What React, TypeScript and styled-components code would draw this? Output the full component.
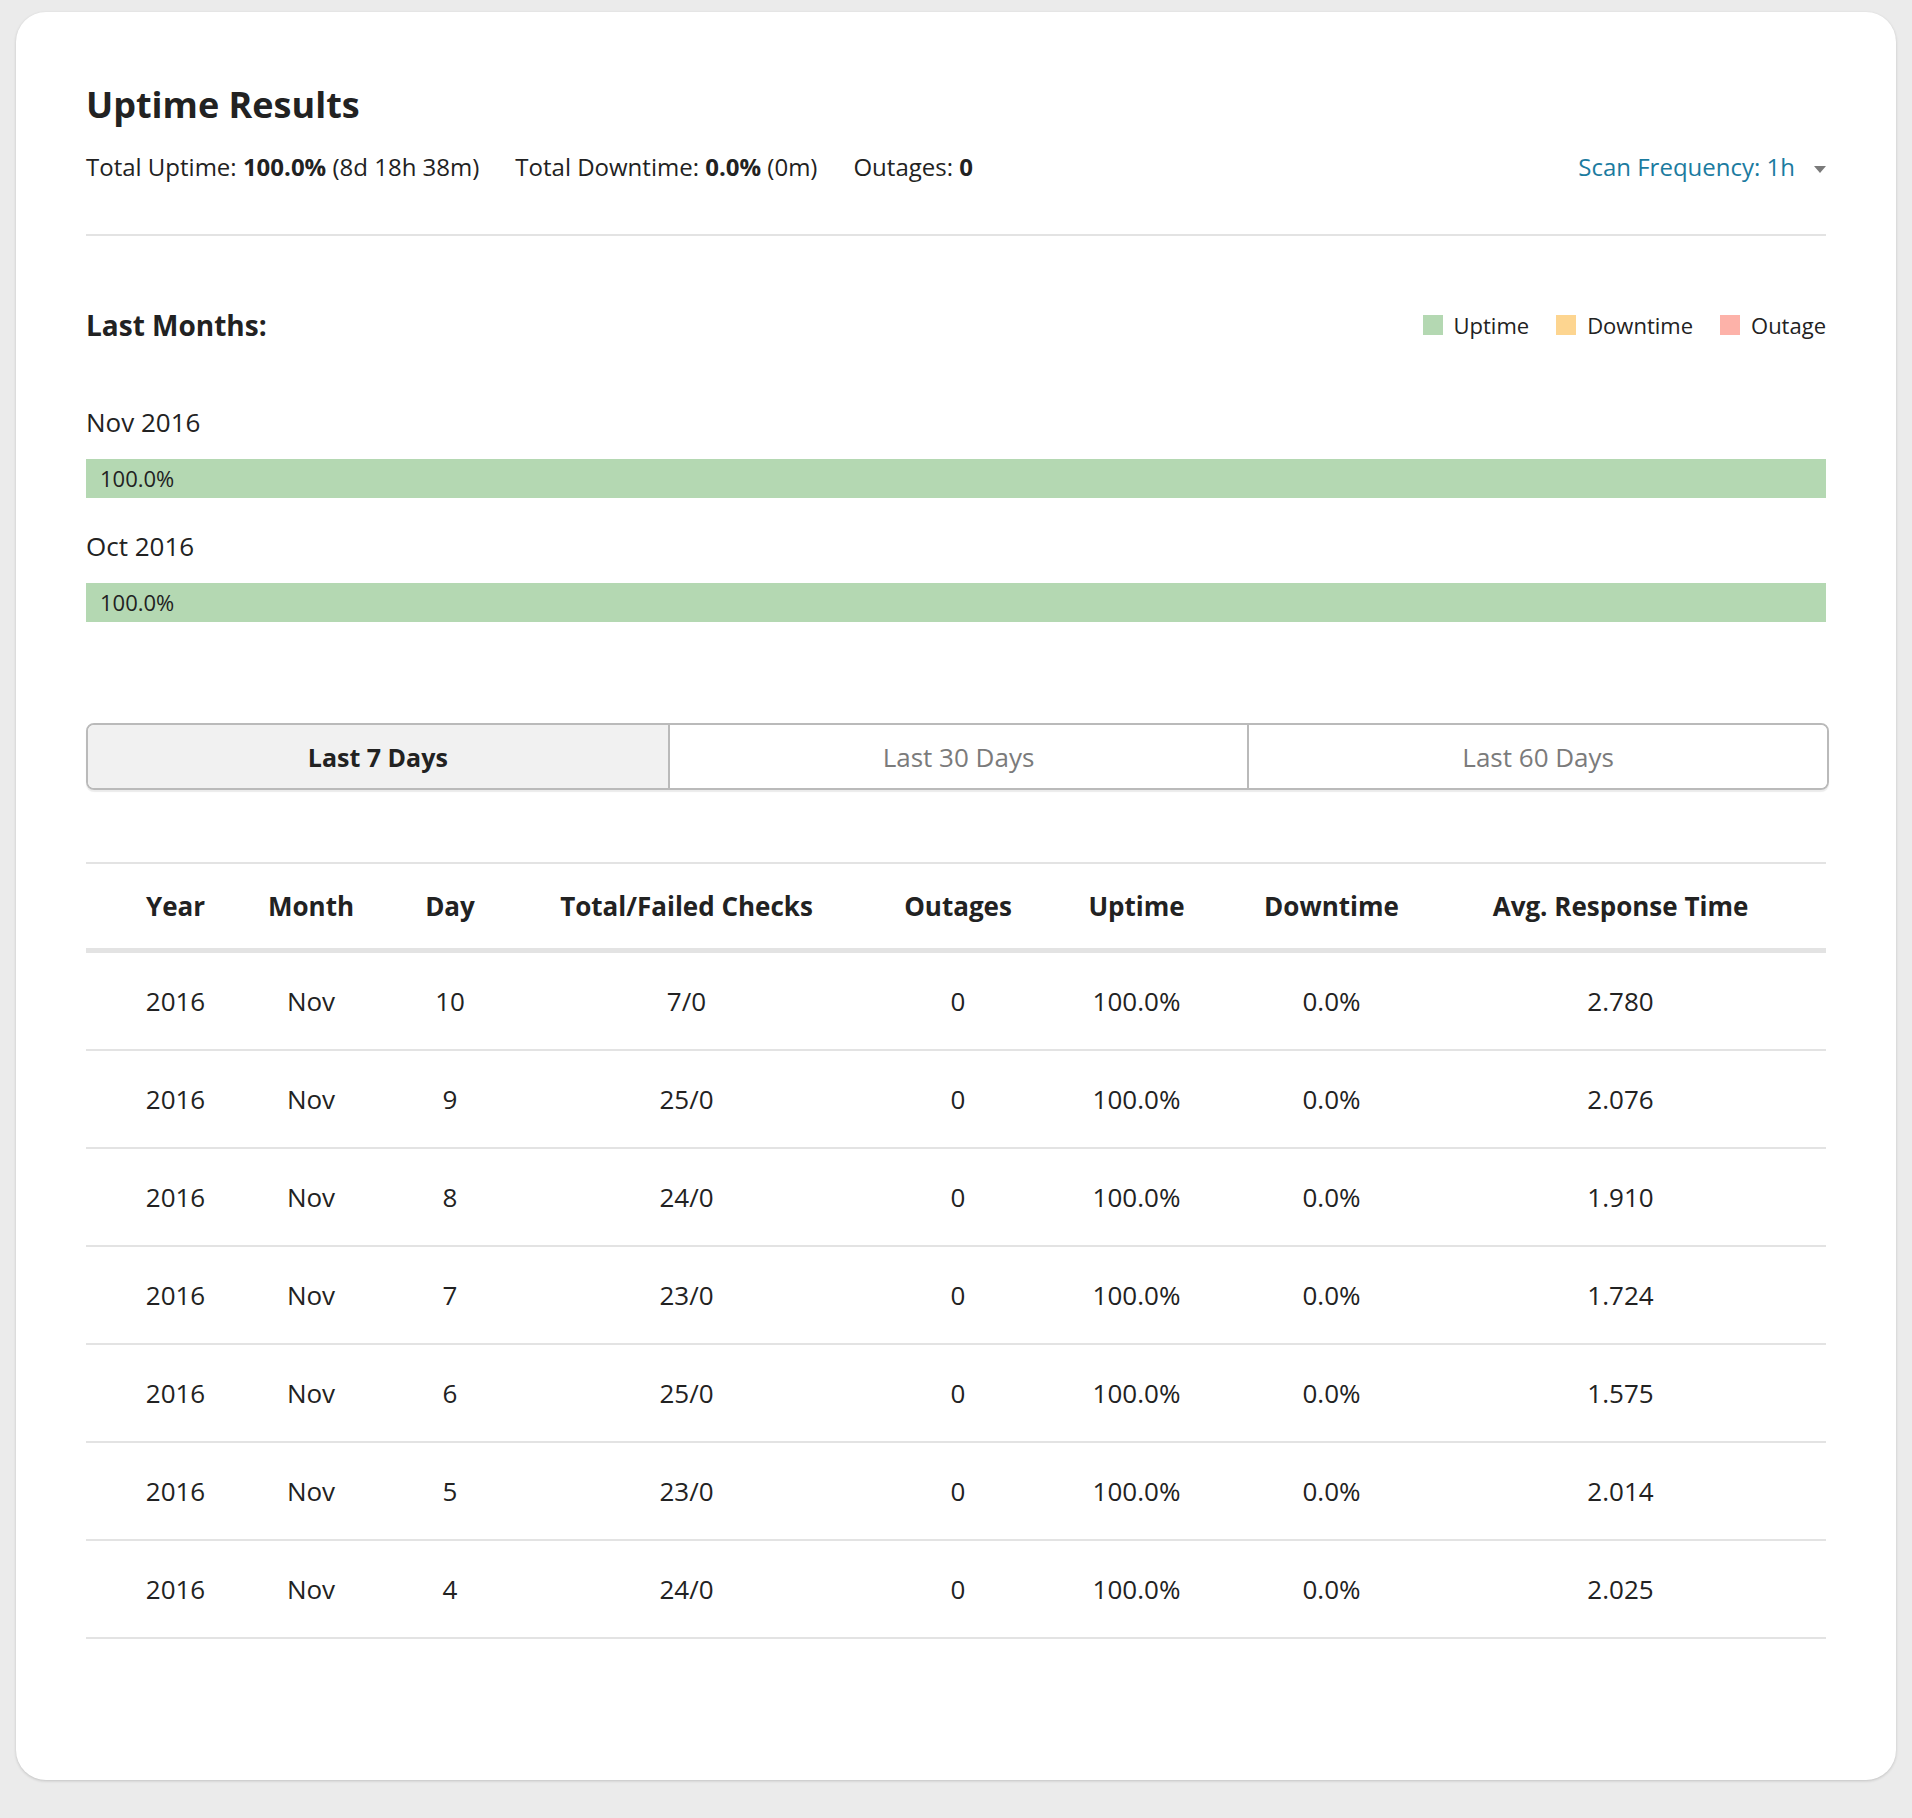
import React from "react";
import styled, { createGlobalStyle } from "styled-components";

const GlobalStyle = createGlobalStyle`
  html, body {
    margin: 0;
    padding: 0;
    background: #ebebeb;
  }
  body {
    font-family: "Open Sans", "Liberation Sans", Arial, sans-serif;
    color: #222;
  }
`;

const Page = styled.div`
  padding: 12px 16px 39px;
`;

const Card = styled.div`
  background: #fff;
  border-radius: 30px;
  box-shadow: 0 1px 3px rgba(0, 0, 0, 0.18);
  padding: 71px 70px 141px;
`;

const Title = styled.h1`
  margin: 0;
  font-size: 36px;
  line-height: 44px;
  font-weight: 700;
  color: #222;
`;

const StatsRow = styled.div`
  margin-top: 22px;
  display: flex;
  align-items: center;
  font-size: 24px;
  line-height: 36px;
`;

const Stat = styled.span`
  margin-right: 36px;
  white-space: nowrap;

  b {
    font-weight: 700;
  }
`;

const ScanFrequency = styled.div`
  margin-left: auto;
  display: flex;
  align-items: center;
  gap: 19px;
  color: #1b7b9f;
  cursor: pointer;
`;

const Caret = styled.span`
  width: 0;
  height: 0;
  border-left: 6px solid transparent;
  border-right: 6px solid transparent;
  border-top: 7px solid #7a7a7a;
  margin-top: 4px;
`;

const Divider = styled.hr`
  margin: 49px 0 0;
  border: 0;
  height: 2px;
  background: #e3e3e3;
`;

const MonthsHeader = styled.div`
  margin-top: 71px;
  display: flex;
  align-items: center;
  justify-content: space-between;
  line-height: 36px;
`;

const SectionLabel = styled.div`
  font-size: 28px;
  font-weight: 700;
`;

const Legend = styled.div`
  display: flex;
  align-items: center;
  gap: 27px;
  font-size: 22px;
`;

const LegendItem = styled.div`
  display: flex;
  align-items: center;
  gap: 11px;
`;

const Swatch = styled.span<{ $color: string }>`
  width: 20px;
  height: 20px;
  background: ${(p) => p.$color};
`;

const MonthList = styled.div`
  margin-top: 61px;
  display: flex;
  flex-direction: column;
  gap: 30px;
`;

const MonthLabel = styled.div`
  font-size: 26px;
  line-height: 36px;
`;

const Bar = styled.div`
  margin-top: 19px;
  height: 39px;
  background: #f3f3f3;
  display: flex;
`;

const BarFill = styled.div<{ $color: string }>`
  background: ${(p) => p.$color};
  font-size: 22px;
  line-height: 39px;
  padding-left: 14px;
  box-sizing: border-box;
  white-space: nowrap;
`;

const Tabs = styled.div`
  margin-top: 101px;
  margin-right: -3px;
  display: grid;
  grid-template-columns: repeat(3, 1fr);
  border: 2px solid #bababa;
  border-radius: 8px;
  overflow: hidden;
  box-shadow: 0 2px 1px rgba(0, 0, 0, 0.08);
`;

const Tab = styled.button<{ $active?: boolean }>`
  height: 63px;
  border: 0;
  border-left: 2px solid #bababa;
  background: ${(p) => (p.$active ? "#f1f1f1" : "#fff")};
  color: ${(p) => (p.$active ? "#222" : "#7b7b7b")};
  font-family: inherit;
  font-size: ${(p) => (p.$active ? "25px" : "26px")};
  font-weight: ${(p) => (p.$active ? 700 : 400)};
  padding: 0;
  cursor: pointer;

  &:first-child {
    border-left: 0;
  }
`;

const Table = styled.div`
  margin-top: 72px;
  border-top: 2px solid #e3e3e3;
`;

const columns = "179px 92px 186px 287px 256px 101px 289px 1fr";

const HeadRow = styled.div`
  display: grid;
  grid-template-columns: ${columns};
  height: 84px;
  border-bottom: 5px solid #e3e3e3;
  font-size: 26px;
  font-weight: 700;
`;

const Row = styled.div`
  display: grid;
  grid-template-columns: ${columns};
  height: 96px;
  border-bottom: 2px solid #e3e3e3;
  font-size: 26px;
`;

const Cell = styled.div`
  display: flex;
  align-items: center;
  justify-content: center;
  white-space: nowrap;
  min-width: 0;

  &:last-child {
    padding-right: 61px;
  }
`;

const months = [
  { label: "Nov 2016", uptime: 100 },
  { label: "Oct 2016", uptime: 100 },
];

const headers = [
  "Year",
  "Month",
  "Day",
  "Total/Failed Checks",
  "Outages",
  "Uptime",
  "Downtime",
  "Avg. Response Time",
];

const rows = [
  ["2016", "Nov", "10", "7/0", "0", "100.0%", "0.0%", "2.780"],
  ["2016", "Nov", "9", "25/0", "0", "100.0%", "0.0%", "2.076"],
  ["2016", "Nov", "8", "24/0", "0", "100.0%", "0.0%", "1.910"],
  ["2016", "Nov", "7", "23/0", "0", "100.0%", "0.0%", "1.724"],
  ["2016", "Nov", "6", "25/0", "0", "100.0%", "0.0%", "1.575"],
  ["2016", "Nov", "5", "23/0", "0", "100.0%", "0.0%", "2.014"],
  ["2016", "Nov", "4", "24/0", "0", "100.0%", "0.0%", "2.025"],
];

export default function App() {
  return (
    <Page>
      <GlobalStyle />
      <Card>
        <Title>Uptime Results</Title>
        <StatsRow>
          <Stat>
            Total Uptime: <b>100.0%</b> (8d 18h 38m)
          </Stat>
          <Stat>
            Total Downtime: <b>0.0%</b> (0m)
          </Stat>
          <Stat>
            Outages: <b>0</b>
          </Stat>
          <ScanFrequency>
            Scan Frequency: 1h
            <Caret />
          </ScanFrequency>
        </StatsRow>
        <Divider />

        <MonthsHeader>
          <SectionLabel>Last Months:</SectionLabel>
          <Legend>
            <LegendItem>
              <Swatch $color="#b4d8b2" />
              Uptime
            </LegendItem>
            <LegendItem>
              <Swatch $color="#fdd590" />
              Downtime
            </LegendItem>
            <LegendItem>
              <Swatch $color="#fdb2a9" />
              Outage
            </LegendItem>
          </Legend>
        </MonthsHeader>

        <MonthList>
          {months.map((m) => (
            <div key={m.label}>
              <MonthLabel>{m.label}</MonthLabel>
              <Bar>
                <BarFill $color="#b4d8b2" style={{ width: `${m.uptime}%` }}>
                  {m.uptime.toFixed(1)}%
                </BarFill>
              </Bar>
            </div>
          ))}
        </MonthList>

        <Tabs>
          <Tab $active>Last 7 Days</Tab>
          <Tab>Last 30 Days</Tab>
          <Tab>Last 60 Days</Tab>
        </Tabs>

        <Table>
          <HeadRow>
            {headers.map((h) => (
              <Cell key={h}>{h}</Cell>
            ))}
          </HeadRow>
          {rows.map((r) => (
            <Row key={r[2]}>
              {r.map((v, i) => (
                <Cell key={i}>{v}</Cell>
              ))}
            </Row>
          ))}
        </Table>
      </Card>
    </Page>
  );
}
